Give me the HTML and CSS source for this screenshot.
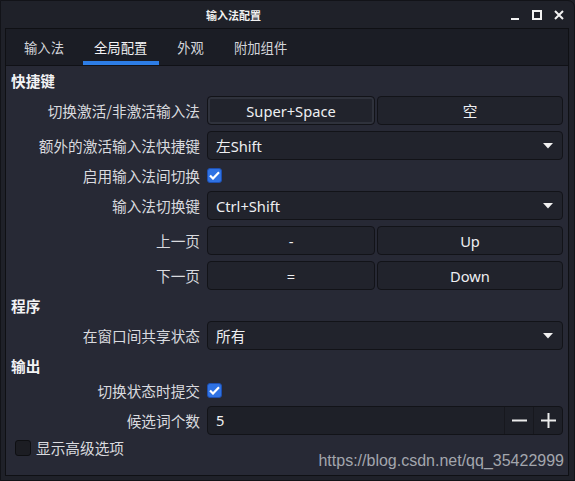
FILE: index.html
```html
<!DOCTYPE html>
<html lang="zh-CN">
<head>
<meta charset="utf-8">
<title>输入法配置</title>
<link rel="stylesheet" href="styles.css">
</head>
<body>
<div class="window">
  <div class="titlebar">
    <span class="title">输入法配置</span>
    <div class="wm-buttons">
      <svg class="wm-icon" width="12" height="12" viewBox="0 0 12 12"><rect x="2" y="9" width="8" height="2" fill="#f2f2f2"/></svg>
      <svg class="wm-icon" width="12" height="12" viewBox="0 0 12 12"><rect x="2" y="2" width="8" height="8" fill="none" stroke="#f2f2f2" stroke-width="2"/></svg>
      <svg class="wm-icon" width="12" height="12" viewBox="0 0 12 12"><path d="M2 2 L10 10 M10 2 L2 10" stroke="#f2f2f2" stroke-width="2"/></svg>
    </div>
  </div>
  <div class="tabwidget">
    <div class="tabbar">
      <div class="tab">输入法</div>
      <div class="tab active">全局配置</div>
      <div class="tab">外观</div>
      <div class="tab">附加组件</div>
    </div>
    <div class="page">
      <div class="section-title first">快捷键</div>
      <div class="form">
        <div class="label">切换激活/非激活输入法</div>
        <div class="pair"><div class="btn focus">Super+Space</div><div class="btn">空</div></div>

        <div class="label">额外的激活输入法快捷键</div>
        <div class="combo"><span>左Shift</span><svg width="10" height="6" viewBox="0 0 10 6"><path d="M0 0 L10 0 L5 5.5 Z" fill="#f0f0f0"/></svg></div>

        <div class="label short">启用输入法间切换</div>
        <div class="checkrow"><span class="check on"><svg width="11" height="9" viewBox="0 0 11 9"><path d="M1 4.5 L4 7.5 L10 1.2" fill="none" stroke="#fff" stroke-width="2.2"/></svg></span></div>

        <div class="label">输入法切换键</div>
        <div class="combo"><span>Ctrl+Shift</span><svg width="10" height="6" viewBox="0 0 10 6"><path d="M0 0 L10 0 L5 5.5 Z" fill="#f0f0f0"/></svg></div>

        <div class="label">上一页</div>
        <div class="pair"><div class="btn">-</div><div class="btn">Up</div></div>

        <div class="label">下一页</div>
        <div class="pair"><div class="btn">=</div><div class="btn">Down</div></div>
      </div>

      <div class="section-title">程序</div>
      <div class="form">
        <div class="label">在窗口间共享状态</div>
        <div class="combo"><span>所有</span><svg width="10" height="6" viewBox="0 0 10 6"><path d="M0 0 L10 0 L5 5.5 Z" fill="#f0f0f0"/></svg></div>
      </div>

      <div class="section-title">输出</div>
      <div class="form">
        <div class="label short">切换状态时提交</div>
        <div class="checkrow"><span class="check on"><svg width="11" height="9" viewBox="0 0 11 9"><path d="M1 4.5 L4 7.5 L10 1.2" fill="none" stroke="#fff" stroke-width="2.2"/></svg></span></div>

        <div class="label">候选词个数</div>
        <div class="spin">
          <span class="spin-value">5</span>
          <div class="spin-btn"><svg width="15" height="15" viewBox="0 0 15 15"><rect x="0" y="6.5" width="15" height="2" fill="#ececec"/></svg></div>
          <div class="spin-btn"><svg width="15" height="15" viewBox="0 0 15 15"><rect x="0" y="6.5" width="15" height="2" fill="#ececec"/><rect x="6.5" y="0" width="2" height="15" fill="#ececec"/></svg></div>
        </div>
      </div>

      <div class="advanced">
        <span class="check off"></span>
        <span class="adv-label">显示高级选项</span>
      </div>
    </div>
  </div>
  <div class="watermark">https://blog.csdn.net/qq_35422999</div>
</div>
</body>
</html>
```

FILE: styles.css
```css
* { box-sizing: border-box; }

html, body {
  margin: 0;
  padding: 0;
  background: #1f2129;
}

body {
  font-family: "Noto Sans", "Noto Sans CJK SC", sans-serif;
  color: #dfe0e4;
}

.window {
  position: relative;
  width: 575px;
  height: 481px;
  background: #1f2129;
  border: 1px solid #121318;
  border-top-right-radius: 7px;
  display: flex;
  flex-direction: column;
  overflow: hidden;
}

.titlebar {
  height: 27px;
  flex: none;
  display: flex;
  align-items: center;
  position: relative;
}

.title {
  margin-left: 205px;
  font-size: 11px;
  font-weight: bold;
  color: #f0f0f0;
  font-family: "Noto Sans CJK SC", sans-serif;
}

.wm-buttons {
  margin-left: auto;
  margin-right: 9px;
  display: flex;
  gap: 10px;
  padding-top: 1px;
}

.wm-icon { display: block; }

.tabwidget {
  flex: none;
  margin: 0 5px 0 4px;
  height: 448px;
  border: 1px solid #0f1014;
  display: flex;
  flex-direction: column;
  background: #272935;
}

.tabbar {
  height: 37px;
  flex: none;
  background: #1b1d25;
  border-bottom: 1px solid #101116;
  display: flex;
  padding-left: 3px;
}

.tab {
  position: relative;
  padding: 0 15px;
  font-size: 13.33px;
  line-height: 37px;
  color: #d4d6db;
  font-family: "Noto Sans CJK SC", sans-serif;
}

.tab.active { color: #f2f2f4; }

.tab.active::after {
  content: "";
  position: absolute;
  left: 4px;
  right: 3px;
  bottom: 0;
  height: 4px;
  background: #2d7de6;
}

.page {
  flex: 1;
  padding: 6px 5px 0 5px;
  display: flex;
  flex-direction: column;
}

.section-title {
  font-family: "Noto Sans CJK SC", sans-serif;
  font-weight: bold;
  font-size: 14.67px;
  line-height: 18px;
  height: 18px;
  color: #f2f2f4;
  margin: 7px 0 6px 0;
}

.section-title.first { margin-top: 0; }

.form {
  display: grid;
  grid-template-columns: 189px 1fr;
  column-gap: 7px;
  row-gap: 6px;
  align-items: center;
}

.label {
  text-align: right;
  font-size: 14.67px;
  line-height: 29px;
  color: #d9dadf;
  white-space: nowrap;
  font-family: "Noto Sans CJK SC", sans-serif;
}

.label.short { line-height: 19px; }

.pair {
  display: grid;
  grid-template-columns: 168px 1fr;
  column-gap: 2px;
}

.btn {
  height: 29px;
  border: 1px solid #121318;
  border-radius: 4px;
  background: #21232c;
  color: #eeeff2;
  font-size: 14.67px;
  display: flex;
  align-items: center;
  justify-content: center;
}

.btn.focus {
  box-shadow: inset 0 0 0 2px #2f323c;
}

.combo {
  height: 29px;
  border: 1px solid #121318;
  border-radius: 4px;
  background: #21232c;
  color: #eeeff2;
  font-size: 14.67px;
  display: flex;
  align-items: center;
  padding: 0 9px 0 8px;
}

.combo span { flex: 1; }

.combo svg { display: block; margin-top: 1px; }

.checkrow {
  height: 19px;
  display: flex;
  align-items: center;
}

.check {
  width: 15px;
  height: 15px;
  border-radius: 3px;
  display: flex;
  align-items: center;
  justify-content: center;
  flex: none;
}

.check.on {
  background: #2f72e3;
  border: 1px solid #1e4fb0;
}

.check.off {
  width: 16px;
  height: 16px;
  background: #1c1d23;
  border: 1px solid #0e0f12;
}

.spin {
  height: 29px;
  border: 1px solid #121318;
  border-radius: 4px;
  background: #1e2028;
  display: flex;
  align-items: stretch;
}

.spin-value {
  flex: 1;
  padding-left: 8px;
  font-size: 14.67px;
  line-height: 27px;
  color: #eeeff2;
}

.spin-btn {
  width: 29px;
  border-left: 1px solid #17181e;
  display: flex;
  align-items: center;
  justify-content: center;
}

.spin-btn svg { display: block; }

.advanced {
  margin-top: 3px;
  margin-left: 4px;
  display: flex;
  align-items: center;
  gap: 5px;
  height: 19px;
}

.adv-label {
  font-size: 14.67px;
  color: #d9dadf;
  font-family: "Noto Sans CJK SC", sans-serif;
}

.watermark {
  position: absolute;
  right: 10px;
  top: 450px;
  font-family: "Liberation Sans", Arial, sans-serif;
  font-size: 16px;
  color: #a3a6ad;
  line-height: 20px;
}
```
